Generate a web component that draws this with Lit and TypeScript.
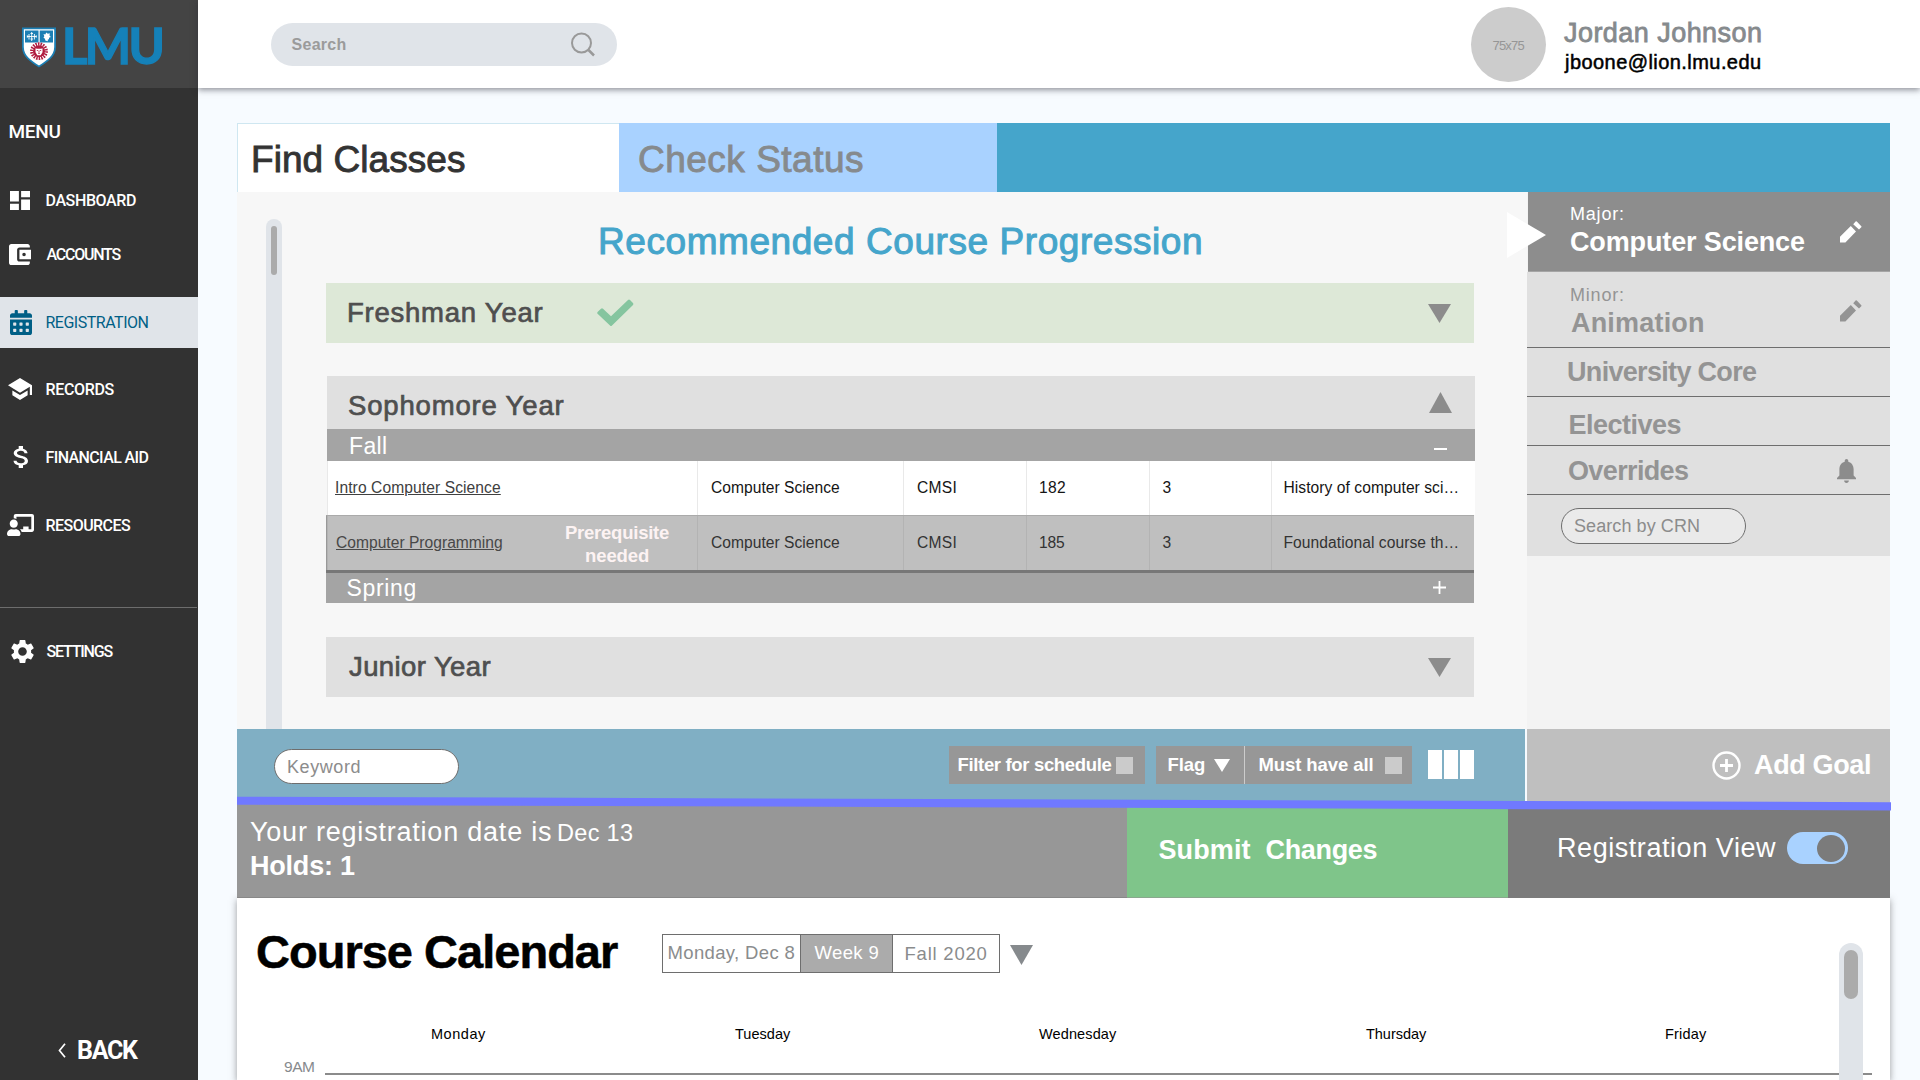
import { LitElement, html, css, svg, nothing } from "lit";
import { customElement, property } from "lit/decorators.js";
import { classMap } from "lit/directives/class-map.js";

/** One line of text, tracked so that its ink spans exactly `w` pixels. */
@customElement("fit-text")
class FitText extends LitElement {
  @property({ type: Number }) w = 0;
  static styles = css`
    :host { display: block; flex: none; white-space: pre; }
  `;
  render() {
    return html`<slot></slot>`;
  }
  firstUpdated() {
    const text = this.textContent ?? "";
    const cs = getComputedStyle(this);
    const ctx = document.createElement("canvas").getContext("2d")!;
    ctx.font = `${cs.fontWeight} ${cs.fontSize} ${cs.fontFamily}`;
    const m = ctx.measureText(text);
    const ink = m.actualBoundingBoxRight + m.actualBoundingBoxLeft;
    const spacing = (this.w - ink) / Math.max(1, text.length - 1);
    this.style.width = `${this.w}px`;
    this.style.letterSpacing = `${spacing.toFixed(3)}px`;
    this.style.textIndent = `${m.actualBoundingBoxLeft.toFixed(2)}px`;
  }
}

const fit = (text: string, w: number, cls = "") => html`<fit-text class=${cls} w=${w}>${text}</fit-text>`;

const base = css`
  :host { display: block; box-sizing: border-box; font-family: "Liberation Sans", Arial, sans-serif; }
  * { box-sizing: border-box; }
  svg { display: block; flex: none; }
  .row { display: flex; align-items: center; }
`;

const down = (w: number, h: number, color: string) =>
  html`<svg width=${w} height=${h} viewBox="0 0 10 10" preserveAspectRatio="none"><path d="M0 0H10L5 10Z" fill=${color} /></svg>`;

const icons = {
  dashboard: svg`<path d="M3 13h8V3H3v10zm0 8h8v-6H3v6zm10 0h8V11h-8v10zm0-18v6h8V3h-8z"/>`,
  wallet: svg`<path d="M21 18v1c0 1.1-.9 2-2 2H5c-1.11 0-2-.9-2-2V5c0-1.1.89-2 2-2h14c1.1 0 2 .9 2 2v1h-9c-1.11 0-2 .9-2 2v8c0 1.1.89 2 2 2h9zm-9-2h10V8H12v8zm4-2.500c-.83 0-1.500-.67-1.500-1.500s.67-1.500 1.500-1.500 1.500.67 1.500 1.500-.67 1.500-1.500 1.500z"/>`,
  calendar: svg`<path d="M0 464c0 26.500 21.500 48 48 48h352c26.500 0 48-21.500 48-48V192H0v272zm320-196c0-6.600 5.400-12 12-12h40c6.600 0 12 5.400 12 12v40c0 6.600-5.400 12-12 12h-40c-6.600 0-12-5.400-12-12v-40zm0 128c0-6.600 5.400-12 12-12h40c6.600 0 12 5.400 12 12v40c0 6.600-5.400 12-12 12h-40c-6.600 0-12-5.400-12-12v-40zM192 268c0-6.600 5.400-12 12-12h40c6.600 0 12 5.400 12 12v40c0 6.600-5.400 12-12 12h-40c-6.600 0-12-5.400-12-12v-40zm0 128c0-6.600 5.400-12 12-12h40c6.600 0 12 5.400 12 12v40c0 6.600-5.400 12-12 12h-40c-6.600 0-12-5.400-12-12v-40zM64 268c0-6.600 5.400-12 12-12h40c6.600 0 12 5.400 12 12v40c0 6.600-5.400 12-12 12H76c-6.600 0-12-5.400-12-12v-40zm0 128c0-6.600 5.400-12 12-12h40c6.600 0 12 5.400 12 12v40c0 6.600-5.400 12-12 12H76c-6.600 0-12-5.400-12-12v-40zM400 64h-48V16c0-8.800-7.200-16-16-16h-32c-8.800 0-16 7.200-16 16v48H160V16c0-8.800-7.200-16-16-16h-32c-8.800 0-16 7.200-16 16v48H48C21.500 64 0 85.500 0 112v48h448v-48c0-26.500-21.500-48-48-48z"/>`,
  school: svg`<path d="M5 13.180v4L12 21l7-3.820v-4L12 17l-7-3.820zM12 3L1 9l11 6 9-4.910V17h2V9L12 3z"/>`,
  dollar: svg`<path d="M11.800 10.900c-2.270-.59-3-1.200-3-2.150 0-1.090 1.010-1.850 2.700-1.850 1.780 0 2.440.85 2.500 2.100h2.210c-.07-1.720-1.120-3.300-3.210-3.810V3h-3v2.160c-1.940.42-3.500 1.680-3.500 3.610 0 2.310 1.910 3.460 4.700 4.130 2.500.6 3 1.480 3 2.410 0 .69-.49 1.790-2.700 1.790-2.060 0-2.870-.92-2.980-2.100h-2.200c.12 2.190 1.760 3.420 3.680 3.830V21h3v-2.150c1.950-.37 3.500-1.500 3.500-3.550 0-2.840-2.430-3.810-4.700-4.400z"/>`,
  teacher: svg`<path d="M208 352c-2.390 0-4.780.35-7.060 1.090C187.980 357.300 174.350 360 160 360c-14.350 0-27.980-2.700-40.950-6.910-2.280-.74-4.660-1.090-7.050-1.090C49.940 352-.33 402.480 0 464.620.14 490.880 21.730 512 48 512h224c26.270 0 47.860-21.120 48-47.380.33-62.140-49.940-112.620-112-112.620zm-48-32c53.020 0 96-42.980 96-96s-42.980-96-96-96-96 42.980-96 96 42.980 96 96 96zM592 0H208c-26.470 0-48 22.250-48 49.590V96c23.420 0 45.100 6.780 64 17.800V64h352v288h-64v-64H384v64h-76.240c19.100 16.690 33.120 38.730 39.690 64H592c26.470 0 48-22.250 48-49.590V49.590C640 22.250 618.470 0 592 0z"/>`,
  gear: svg`<path d="M19.140 12.940c.04-.3.060-.61.060-.94 0-.32-.02-.64-.07-.94l2.030-1.580c.18-.14.230-.41.120-.61l-1.920-3.320c-.12-.22-.37-.29-.59-.22l-2.390.96c-.5-.38-1.030-.7-1.620-.94l-.36-2.540c-.04-.24-.24-.41-.48-.41h-3.840c-.24 0-.43.17-.47.41l-.36 2.540c-.59.24-1.130.57-1.620.94l-2.390-.96c-.22-.08-.47 0-.59.22L2.740 8.870c-.12.21-.08.470.12.610l2.030 1.580c-.05.3-.09.63-.09.94s.02.640.07.940l-2.030 1.580c-.18.14-.23.410-.12.610l1.920 3.320c.12.22.37.290.59.220l2.390-.96c.5.38 1.030.7 1.620.94l.36 2.540c.05.24.24.410.48.410h3.840c.24 0 .44-.17.470-.41l.36-2.540c.59-.24 1.130-.56 1.620-.94l2.390.96c.22.080.47 0 .59-.22l1.920-3.320c.12-.22.070-.47-.12-.61l-2.010-1.580zM12 15.600c-1.980 0-3.600-1.620-3.600-3.600s1.620-3.600 3.600-3.600 3.600 1.620 3.600 3.600-1.620 3.600-3.600 3.600z"/>`,
  pencil: svg`<path d="M0 21.500V15.800L10.800 5L16 10.600L5.400 21.500ZM13.200 3.200L15.600 .6Q16.200 0 16.800 .6L21.300 5.200Q21.800 5.800 21.300 6.300L19 8.600Z"/>`,
  bell: svg`<path d="M12 22c1.100 0 2-.9 2-2h-4c0 1.100.9 2 2 2zm6-6v-5c0-3.070-1.640-5.640-4.500-6.320V4c0-.83-.67-1.500-1.500-1.500s-1.500.67-1.500 1.500v.68C7.630 5.360 6 7.920 6 11v5l-2 2v1h16v-1l-2-2z"/>`,
};

type NavItem = { label: string; w: number; icon: unknown; box: string; iw: number; ih: number; h: number; active?: boolean };

const navItems: NavItem[] = [
  { label: "DASHBOARD", w: 89.5, icon: icons.dashboard, box: "3 3 18 18", iw: 20, ih: 19, h: 54 },
  { label: "ACCOUNTS", w: 75, icon: icons.wallet, box: "3 3 19 18", iw: 22, ih: 21, h: 54 },
  { label: "REGISTRATION", w: 102, icon: icons.calendar, box: "0 0 448 512", iw: 22, ih: 25, h: 51, active: true },
  { label: "RECORDS", w: 68, icon: icons.school, box: "1 3 22 18", iw: 24, ih: 22, h: 68 },
  { label: "FINANCIAL AID", w: 102, icon: icons.dollar, box: "6 3 10.500 18", iw: 15, ih: 22, h: 68 },
  { label: "RESOURCES", w: 84.5, icon: icons.teacher, box: "0 0 640 512", iw: 27, ih: 22, h: 68 },
];

@customElement("side-nav")
class SideNav extends LitElement {
  static styles = [
    base,
    css`
      :host { width: 198px; height: 1080px; background: #323232; color: #fff; display: flex; flex-direction: column; font-family: Roboto, "Liberation Sans", sans-serif; }
      .logo { height: 88px; background: #444; padding: 6px 0 0 22px; }
      .word { font: 700 49px/36px Lato, sans-serif; color: #1581b9; -webkit-text-stroke: 1.3px #1581b9; margin-left: 9px; margin-top: -5px; }
      .menu { font-size: 19px; font-weight: 500; line-height: 22px; margin: 33px 0 30px 9.5px; }
      .item { font-size: 16px; font-weight: 500; }
      .ico { width: 46.5px; flex: none; display: flex; justify-content: center; padding-right: 6px; }
      .active { background: #e0e4e9; color: #005f86; font-weight: 400; margin: 16px 0 7px; }
      .active svg { margin-left: 1px; }
      .rule { height: 1px; width: 197px; background: #6d6d6d; margin: 48px 0 27px; }
      .settings { height: 32px; }
      .settings .ico { padding-right: 2px; }
      .back { margin: auto 0 14px 58px; height: 32px; font-size: 25px; font-weight: 700; gap: 12px; }
    `,
  ];
  item(i: NavItem) {
    return html`<div class=${classMap({ row: true, item: true, active: !!i.active })} style="height:${i.h}px">
      <span class="ico"><svg width=${i.iw} height=${i.ih} viewBox=${i.box} preserveAspectRatio="none" fill="currentColor">${i.icon}</svg></span>
      ${fit(i.label, i.w)}
    </div>`;
  }
  render() {
    return html`
      <div class="logo row">
        <svg width="34" height="41" viewBox="0 0 34 41">
          <path d="M0 0.500H34V20C34 30 25 35 17 40.500C9 35 0 30 0 20Z" fill="#1c7fb4" />
          <path d="M1.800 2.200H32.200V20C32.200 29 24.500 33.500 17 38.500C9.500 33.500 1.800 29 1.800 20Z" fill="#fff" />
          <path d="M3 3.400H16.500V15.500H3ZM17.700 3.400H31V15.500H17.700Z" fill="#1c7fb4" />
          <path d="M5 9.500H14.500M9.700 5V14M7 7V12.500M12.400 7V12.500M5.300 8.300V10.700M14.200 8.300V10.700M8.500 6.500H11M8.500 12H11" stroke="#fff" stroke-width=".9" fill="none" />
          <path d="M21.500 7l1.800 .6 1-2 1.500 1.200 2-.5-.3 2.200 1.300 1.500-1.800.7 0 1.500-1.200.3 0 1.700-2.500-.6-.3-1.800-1.500-1 .8-1.600z" fill="#fff" />
          <circle cx="17" cy="24.200" r="7.200" fill="none" stroke="#b01c40" stroke-width="3.400" stroke-dasharray="1.500 1.013" />
          <circle cx="17" cy="24.200" r="6" fill="#b01c40" />
          <path d="M13.500 21.200l1.500 .5h4l1.500-.5v4l-1.800 3h-3.400L13.500 25.200z" fill="#fff" />
          <path d="M14.800 23.500h1.500M17.700 23.500h1.500M16 26.300h2M17 24v1.500" stroke="#b01c40" stroke-width=".8" />
        </svg>
        ${fit("LMU", 96.500, "word")}
      </div>
      ${fit("MENU", 51, "menu")}
      ${navItems.map((i) => this.item(i))}
      <div class="rule"></div>
      <div class="row item settings">
        <span class="ico"><svg width="23" height="23" viewBox="2.600 2.400 18.800 19.200" fill="currentColor">${icons.gear}</svg></span>
        ${fit("SETTINGS", 67)}
      </div>
      <div class="back row">
        <svg width="8" height="15" viewBox="0 0 8 15"><path d="M7 0.800L1.500 7.500L7 14.200" fill="none" stroke="#fff" stroke-width="1.700" /></svg>
        ${fit("BACK", 61)}
      </div>
    `;
  }
}

@customElement("top-bar")
class TopBar extends LitElement {
  static styles = [
    base,
    css`
      :host { height: 88px; background: #fff; padding: 0 159px 0 73px; display: flex; justify-content: space-between; box-shadow: 0 2px 6px rgba(40, 40, 50, 0.5); position: relative; }
      .search { width: 346px; height: 43px; margin-top: 23px; border-radius: 22px; background: #e0e4e9; padding: 0 22px 0 20.5px; justify-content: space-between; color: #9b9b9b; font-weight: 700; font-size: 16px; line-height: 45px; }
      .user { gap: 18px; height: 88px; }
      .avatar { width: 75px; height: 75px; border-radius: 50%; background: #ccc; color: #969696; display: flex; align-items: center; justify-content: center; font-size: 13px; padding-top: 3px; }
      .name { font-size: 27px; -webkit-text-stroke: 0.8px #868a8d; line-height: 32px; color: #868a8d; margin-top: 3px; }
      .mail { font-size: 20px; -webkit-text-stroke: 0.5px #000; line-height: 26px; color: #000; }
    `,
  ];
  render() {
    return html`
      <div class="search row">
        ${fit("Search", 54)}
        <svg width="25" height="25" viewBox="0 0 25 25" fill="none" stroke="#999" stroke-width="2"><circle cx="11.500" cy="11" r="9.500" /><path d="M18.500 18L24 23.500" stroke-width="2.500" /></svg>
      </div>
      <div class="user row">
        <div class="avatar">${fit("75x75", 32)}</div>
        <div>${fit("Jordan Johnson", 197, "name")}${fit("jboone@lion.lmu.edu", 196, "mail")}</div>
      </div>
    `;
  }
}

const courses = [
  { name: "Intro Computer Science", nw: 164, no: "182", desc: "History of computer sci…", locked: false },
  { name: "Computer Programming", nw: 166, no: "185", desc: "Foundational course th…", locked: true },
];

@customElement("course-finder")
class CourseFinder extends LitElement {
  static styles = [
    base,
    css`
      :host { height: 537px; background: #f7f7f7; display: flex; padding: 27px 0 0 29px; overflow: hidden; }
      .track { width: 15.5px; height: 520px; flex: none; background: #e0e4e9; border-radius: 8px 8px 0 0; padding: 7px 0 0 5px; }
      .thumb { width: 5.5px; height: 49px; border-radius: 3px; background: #ababab; }
      .list { margin-left: 44.500px; width: 1149px; }
      .title { font-size: 37px; -webkit-text-stroke: 1px #45a5cb; line-height: 46px; color: #45a5cb; margin: 0 0 18px 275px; }
      .year { width: 1148px; height: 60px; padding: 0 23px; font-size: 27.5px; -webkit-text-stroke: 0.7px #4f4f4f; color: #4f4f4f; background: #e0e0e0; }
      .year .arrow { margin-left: auto; }
      .done { background: #dde8d7; margin-bottom: 33px; }
      .check { margin-left: 54px; }
      .open { margin-left: 1px; height: 53px; padding: 7px 23px 0 22px; }
      .open .arrow { margin-bottom: 7px; }
      .term { width: 1148px; height: 32px; background: #a4a4a4; color: #fff; font-size: 23px; padding: 3px 28px 0 23px; justify-content: space-between; }
      .fall { margin-left: 1px; }
      .fall svg { margin-top: 5px; }
      .spring { height: 33px; padding: 1px 28px 0 21.5px; border-top: 3px solid #777; margin-bottom: 34px; }
      .spring svg { margin-bottom: 3px; }
      .course { display: grid; grid-template-columns: 370px 206px 123px 122.500px 122px 1fr; width: 1148px; height: 54px; margin-left: 1px; background: #fff; font-size: 15.600px; line-height: 54px; color: #151515; }
      .cell { border-left: 1.500px solid #e9e9e9; padding-left: 13px; display: flex; }
      .cell:first-child { padding-left: 8px; color: #404040; }
      .link { border-bottom: 0; text-decoration: underline; }
      .locked { height: 55px; margin-left: 0; background: #bfbfbf; color: #333; border-top: 1px solid #aaa; border-left: 1px solid #999; line-height: 53px; }
      .locked .cell { border-color: #b3b3b3; }
      .locked .cell:first-child { color: #484848; }
      .note { margin: 6px 0 0 64px; font-weight: 700; font-size: 18.500px; line-height: 22.500px; color: #fdf3f3; display: flex; flex-direction: column; align-items: center; }
    `,
  ];
  render() {
    return html`
      <div class="track"><div class="thumb"></div></div>
      <div class="list">
        ${fit("Recommended Course Progression", 600, "title")}
        <div class="year done row">
          ${fit("Freshman Year", 194)}
          <svg class="check" width="37" height="28" viewBox="0 0 37 28"><path d="M0.300 14.500Q0 13.500 .8 12.700L4 9.700Q5 9 6 9.700L14 17.200L31 1Q32 .2 33 1L36 4Q36.800 5 36 6L15 26.500Q14 27.500 13 26.500Z" fill="#85c59f" /></svg>
          <span class="arrow">${down(23, 19, "#8c8c8c")}</span>
        </div>
        <div class="year open row">
          ${fit("Sophomore Year", 215)}
          <svg class="arrow" width="23" height="21" viewBox="0 0 23 21"><path d="M0 21H23L11.500 0Z" fill="#8c8c8c" /></svg>
        </div>
        <div class="term fall row">
          ${fit("Fall", 36)}
          <svg width="13" height="2"><path d="M0 0H13V2H0Z" fill="#fff" /></svg>
        </div>
        ${courses.map(
          (c) => html`<div class=${classMap({ course: true, locked: c.locked })}>
            <div class="cell">
              ${fit(c.name, c.nw, "link")}
              ${c.locked ? html`<div class="note">${fit("Prerequisite", 103)}${fit("needed", 63)}</div>` : nothing}
            </div>
            <div class="cell">${fit("Computer Science", 128)}</div>
            <div class="cell">${fit("CMSI", 38.500)}</div>
            <div class="cell">${fit(c.no, 25)}</div>
            <div class="cell">${fit("3", 8)}</div>
            <div class="cell">${fit(c.desc, 173)}</div>
          </div>`
        )}
        <div class="term spring row">
          ${fit("Spring", 68)}
          <svg width="13" height="13" viewBox="0 0 13 13"><path d="M0 6.500H13M6.500 0V13" stroke="#fff" stroke-width="1.800" /></svg>
        </div>
        <div class="year row">
          ${fit("Junior Year", 142)}
          <span class="arrow">${down(23, 19, "#8c8c8c")}</span>
        </div>
      </div>
    `;
  }
}

@customElement("goal-panel")
class GoalPanel extends LitElement {
  static styles = [
    base,
    css`
      :host { width: 363px; height: 537px; background: #f3f3f3; color: #949494; position: relative; font-size: 27px; font-weight: 700; }
      .small { font-size: 18px; font-weight: 400; line-height: 22px; }
      .goal { background: #e0e0e0; padding: 12px 28px 0 44px; display: flex; justify-content: space-between; border-bottom: 1px solid #6e6e6e; height: 76px; line-height: 34px; }
      .goal svg { margin-top: 16px; }
      .major { height: 80px; margin-left: 1px; padding-left: 43px; padding-top: 11px; background: #8d8d8d; color: #fff; border-bottom: 1px solid #a5a5a5; }
      .major svg { margin-top: 18px; }
      .line { height: 49px; background: #e0e0e0; border-bottom: 1px solid #6e6e6e; padding: 0 34px 0 41px; justify-content: space-between; line-height: 47px; }
      .electives { padding-top: 8px; padding-left: 42.500px; }
      .overrides { padding-top: 3px; padding-left: 42px; }
      .overrides svg { margin-bottom: 2px; }
      .find { background: #e0e0e0; height: 61px; padding: 13px 0 0 34px; }
      .crn { width: 185px; height: 36px; border: 1px solid #6e6e6e; border-radius: 18px; background: #eaeaea; color: #8c8c8c; font-weight: 400; font-size: 18px; padding: 1px 0 0 12px; }
      .pointer { position: absolute; left: -20px; top: 20px; }
    `,
  ];
  render() {
    const pencil = html`<svg width="22" height="22" viewBox="0 0 22 22" fill="currentColor">${icons.pencil}</svg>`;
    return html`
      <div class="goal major"><div>${fit("Major:", 52, "small")}${fit("Computer Science", 234)}</div>${pencil}</div>
      <div class="goal"><div>${fit("Minor:", 52, "small")}${fit("Animation", 132)}</div>${pencil}</div>
      <div class="line row">${fit("University Core", 189)}</div>
      <div class="line row electives">${fit("Electives", 111)}</div>
      <div class="line row overrides">
        ${fit("Overrides", 119)}
        <svg width="19" height="24" viewBox="4 2.500 16 19.500" preserveAspectRatio="none" fill="#8c8c8c">${icons.bell}</svg>
      </div>
      <div class="find"><div class="crn row">${fit("Search by CRN", 125)}</div></div>
      <svg class="pointer" width="39" height="46" viewBox="0 0 39 46"><path d="M0 0L39 23L0 46Z" fill="#fff" /></svg>
    `;
  }
}

@customElement("filter-bar")
class FilterBar extends LitElement {
  static styles = [
    base,
    css`
      :host { height: 75px; display: flex; position: relative; color: #fff; }
      .filters { width: 1288px; background: #80afc4; padding: 17px 51px 0 37px; display: flex; align-items: flex-start; }
      .keyword { width: 185px; height: 35px; margin: 3px auto 0 0; background: #fff; border: 1px solid #6e6e6e; border-radius: 18px; color: #8c8c8c; font-size: 18px; padding: 2px 0 0 13px; }
      .btn { height: 38px; background: #979797; font-size: 18.500px; font-weight: 700; }
      .schedule { width: 196.500px; padding-left: 10px; gap: 4px; margin-right: 11px; }
      .flag { width: 88.500px; padding-left: 12.5px; gap: 9px; border-right: 1px solid #ccc; }
      .all { width: 167.500px; padding-left: 15px; gap: 12px; margin-right: 16px; }
      .box { width: 17px; height: 17px; background: #cbcbcb; }
      .cols { display: flex; gap: 2px; margin-top: 4px; }
      .col { width: 14px; height: 29px; background: #fff; }
      .add { flex: 1; margin-left: 2px; background: #bfbfbf; padding: 0 20px 2px 0; justify-content: flex-end; gap: 13px; font-size: 27px; font-weight: 700; }
      .accent { position: absolute; left: 0; top: 67px; z-index: 1; }
    `,
  ];
  render() {
    return html`
      <div class="filters">
        <div class="keyword row">${fit("Keyword", 71.500)}</div>
        <div class="btn schedule row">${fit("Filter for schedule", 153)}<div class="box"></div></div>
        <div class="btn flag row">${fit("Flag", 36.500)}${down(16, 13, "#fff")}</div>
        <div class="btn all row">${fit("Must have all", 113)}<div class="box"></div></div>
        <div class="cols"><div class="col"></div><div class="col"></div><div class="col"></div></div>
      </div>
      <div class="add row">
        <svg width="29" height="29" viewBox="0 0 29 29" fill="none" stroke="#fff" stroke-width="2.400"><circle cx="14.500" cy="14.500" r="13" /><path d="M8 14.500H21M14.500 8V21" stroke-width="2.800" /></svg>
        ${fit("Add Goal", 116)}
      </div>
      <svg class="accent" width="1654" height="16" viewBox="0 0 1654 16"><path d="M0 0.700L1654 6.200V14.400L0 8.700Z" fill="#7079ff" /></svg>
    `;
  }
}

@customElement("status-bar")
class StatusBar extends LitElement {
  static styles = [
    base,
    css`
      :host { height: 94px; display: flex; color: #fff; font-size: 27px; }
      .info { width: 889.500px; background: #979797; padding: 11px 0 0 13px; border-bottom: 1px solid #888; }
      .date { gap: 7px; line-height: 34px; align-items: flex-start; }
      .day { font-size: 23.500px; padding-top: 1px; }
      .holds { font-weight: 700; line-height: 32px; margin-left: 1px; }
      .submit { width: 381.500px; background: #7fc58a; padding-left: 32px; gap: 16px; font-weight: 700; border-bottom: 1px solid #8aa88e; }
      .view { flex: 1; background: #7b7b7b; padding: 0 42px 6px 0; justify-content: flex-end; gap: 11px; }
      .toggle { width: 61px; height: 32px; border-radius: 16px; background: #a9d2ff; display: flex; align-items: center; justify-content: flex-end; padding-right: 3px; }
      .knob { width: 28px; height: 27px; border-radius: 50%; background: #7b7b7b; }
    `,
  ];
  render() {
    return html`
      <div class="info">
        <div class="date row">${fit("Your registration date is", 301)}${fit("Dec 13", 75, "day")}</div>
        ${fit("Holds: 1", 104, "holds")}
      </div>
      <div class="submit row">${fit("Submit", 92)}${fit("Changes", 110)}</div>
      <div class="view row">${fit("Registration View", 217)}<div class="toggle"><div class="knob"></div></div></div>
    `;
  }
}

@customElement("course-calendar")
class CourseCalendar extends LitElement {
  static styles = [
    base,
    css`
      :host { height: 182px; background: #fff; box-shadow: 0 2px 7px rgba(60, 60, 60, 0.5); display: grid; grid-template-columns: 1fr 51px; padding: 0; }
      .head { height: 78px; margin-top: 14px; padding-left: 20px; }
      .title { font-size: 47px; font-weight: 700; -webkit-text-stroke: 0.5px #000; color: #000; }
      .seg { height: 39px; width: 338px; margin: 5px 10px 0 44px; border: 1px solid #6e6e6e; display: flex; color: #8a8c8d; font-size: 18.500px; line-height: 35px; }
      .s { border-right: 1px solid #6e6e6e; display: flex; justify-content: center; }
      .s1 { width: 138px; }
      .s2 { width: 92px; background: #ababab; color: #fff; }
      .s3 { flex: 1; border: 0; padding-top: 1px; }
      .head svg { margin-top: 8px; }
      .days { height: 20px; margin-top: 34px; display: grid; grid-template-columns: 195px 303px 304px 327px 300px 1fr; font-size: 14.500px; color: #000; align-items: center; }
      .d1 { grid-column: 2; }
      .hour { height: 20px; margin: 13px -33px 0 47px; gap: 11px; font-size: 15.5px; color: #868a8d; }
      .rule { flex: 1; height: 2px; background: #8b8b8b; margin-top: 13px; }
      .track { width: 24px; height: 138px; margin-top: 45px; border-radius: 12px 12px 0 0; background: #e0e4e9; padding: 7px 5px 0; z-index: 1; }
      .thumb { height: 49px; border-radius: 7px; background: #ababab; }
    `,
  ];
  render() {
    return html`
      <div>
        <div class="head row">
          ${fit("Course Calendar", 361, "title")}
          <div class="seg">
            <div class="s s1">${fit("Monday, Dec 8", 126)}</div>
            <div class="s s2">${fit("Week 9", 64)}</div>
            <div class="s s3">${fit("Fall 2020", 81)}</div>
          </div>
          ${down(23, 20, "#868a8d")}
        </div>
        <div class="days">
          ${fit("Monday", 54, "d1")}${fit("Tuesday", 56)}${fit("Wednesday", 78)}${fit("Thursday", 61)}${fit("Friday", 41)}
        </div>
        <div class="hour row">${fit("9AM", 30)}<div class="rule"></div></div>
      </div>
      <div class="track"><div class="thumb"></div></div>
    `;
  }
}

@customElement("app-root")
class AppRoot extends LitElement {
  static styles = [
    base,
    css`
      :host { width: 1920px; height: 1080px; overflow: hidden; display: flex; background: #f7fbff; }
      main { flex: 1; }
      .page { margin: 35px 30px 0 39px; }
      .tabs { display: flex; height: 69px; background: #45a5cb; font-size: 37px; line-height: 73px; -webkit-text-stroke-width: 0.9px; }
      .tab { width: 378px; padding-left: 20px; background: #a9d2ff; color: #868a8d; }
      .on { width: 382px; padding-left: 16px; background: #fff; color: #333; border: 1px solid #cfe7f1; border-width: 1px 0 0 1px; line-height: 71px; }
      .body { display: flex; }
      course-finder { flex: 1; }
    `,
  ];
  render() {
    return html`
      <side-nav></side-nav>
      <main>
        <top-bar></top-bar>
        <div class="page">
          <div class="tabs">
            <div class="tab on">${fit("Find Classes", 211)}</div>
            <div class="tab">${fit("Check Status", 224)}</div>
          </div>
          <div class="body"><course-finder></course-finder><goal-panel></goal-panel></div>
          <filter-bar></filter-bar>
          <status-bar></status-bar>
          <course-calendar></course-calendar>
        </div>
      </main>
    `;
  }
}
